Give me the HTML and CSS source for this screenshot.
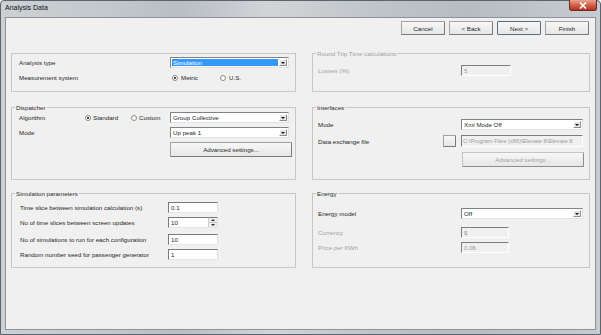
FILE: index.html
```html
<!DOCTYPE html>
<html lang="en">

<head>
    <meta charset="UTF-8">
    <title>Analysis Data</title>
    <link rel="stylesheet" href="styles.css">
</head>

<body>
    <div class="window">
        <div class="titlebar">
            <span class="title">Analysis Data</span>
            <span class="close">
                <svg width="8" height="7" viewBox="0 0 8 7">
                    <path d="M1 0.5 L7 6.5 M7 0.5 L1 6.5" stroke="#fff" stroke-width="1.6" />
                </svg>
            </span>
        </div>

        <div class="client">
            <div class="nav">
                <button class="btn">Cancel</button>
                <button class="btn">&lt; Back</button>
                <button class="btn default">Next &gt;</button>
                <button class="btn">Finish</button>
            </div>

            <div class="groups">
                <!-- analysis type -->
                <div class="group r1 g-analysis">
                    <div class="row">
                        <span class="label">Analysis type</span>
                        <div class="combo w119 selected"><span class="value">Simulation</span><span class="arrow"></span></div>
                    </div>
                    <div class="row">
                        <span class="label">Measurement system</span>
                        <div class="radios">
                            <span class="radio-item w48"><span class="radio checked"></span>Metric</span>
                            <span class="radio-item"><span class="radio"></span>U.S.</span>
                        </div>
                    </div>
                </div>

                <!-- round trip -->
                <div class="group r1 g-right g-rtt disabled">
                    <span class="legend">Round Trip Time calculations</span>
                    <div class="row">
                        <span class="label">Losses (%)</span>
                        <div class="input w50 off">5</div>
                    </div>
                </div>

                <!-- dispatcher -->
                <div class="group r2 g-dispatcher">
                    <span class="legend">Dispatcher</span>
                    <div class="row">
                        <span class="label short">Algorithm</span>
                        <span class="radio-item w46"><span class="radio checked"></span>Standard</span>
                        <span class="radio-item w39"><span class="radio"></span>Custom</span>
                        <div class="combo w119"><span class="value">Group Collective</span><span class="arrow"></span></div>
                    </div>
                    <div class="row">
                        <span class="label">Mode</span>
                        <div class="combo w119"><span class="value">Up peak 1</span><span class="arrow"></span></div>
                    </div>
                    <div class="row tall">
                        <span class="label"></span>
                        <button class="btn wide">Advanced settings...</button>
                    </div>
                </div>

                <!-- interfaces -->
                <div class="group r2 g-right g-interfaces">
                    <span class="legend">Interfaces</span>
                    <div class="row">
                        <span class="label">Mode</span>
                        <div class="combo w122"><span class="value">Xml Mode Off</span><span class="arrow"></span></div>
                    </div>
                    <div class="row h12">
                        <span class="label file">Data exchange file</span>
                        <button class="btn browse"></button>
                        <div class="input w122 off path">C:\Program Files (x86)\Elevate 8\Elevate 8</div>
                    </div>
                    <div class="row tall">
                        <span class="label"></span>
                        <button class="btn wide shifted" disabled>Advanced settings...</button>
                    </div>
                </div>

                <!-- simulation parameters -->
                <div class="group r3 g-sim">
                    <span class="legend">Simulation parameters</span>
                    <div class="row">
                        <span class="label">Time slice between simulation calculation (s)</span>
                        <div class="input w50">0.1</div>
                    </div>
                    <div class="row">
                        <span class="label">No of time slices between screen updates</span>
                        <div class="input w50 spin">
                            <span class="value">10</span>
                            <span class="spinner"><span class="up"></span><span class="down"></span></span>
                        </div>
                    </div>
                    <div class="row spaced">
                        <span class="label">No of simulations to run for each configuration</span>
                        <div class="input w50">10</div>
                    </div>
                    <div class="row">
                        <span class="label">Random number seed for passenger generator</span>
                        <div class="input w50">1</div>
                    </div>
                </div>

                <!-- energy -->
                <div class="group r3 g-right g-energy">
                    <span class="legend">Energy</span>
                    <div class="row">
                        <span class="label">Energy model</span>
                        <div class="combo w122"><span class="value">Off</span><span class="arrow"></span></div>
                    </div>
                    <div class="row spaced-lg dim">
                        <span class="label">Currency</span>
                        <div class="input w48 off">$</div>
                    </div>
                    <div class="row dim">
                        <span class="label">Price per KWh</span>
                        <div class="input w48 off">0.06</div>
                    </div>
                </div>
            </div>
        </div>
    </div>
</body>

</html>
```

FILE: styles.css
```css
* {
    box-sizing: border-box;
}

body {
    margin: 0;
    font-family: "Liberation Sans", Arial, sans-serif;
    font-size: 6.2px;
    color: #262626;
    background: #fff;
}

/* window frame */

.window {
    width: 601px;
    height: 335px;
    display: flex;
    flex-direction: column;
    padding: 0 4px 4px;
    border: 1px solid #5c646b;
    border-radius: 4px 4px 0 0;
    background: linear-gradient(90deg, #cdd1d4 0%, #c3c8cc 18%, #b9bec3 30%, #d2d5d8 45%, #c0c5c9 62%, #b6bcc1 78%, #c8ccd0 100%);
}

.titlebar {
    height: 16px;
    display: flex;
    align-items: flex-start;
}

.title {
    font-size: 7px;
    line-height: 8px;
    color: #111;
    padding: 3px 0 0 0;
}

.close {
    margin: -1px -1px 0 auto;
    width: 28px;
    height: 11px;
    display: flex;
    align-items: center;
    justify-content: center;
    border: 1px solid #6b2a22;
    border-top: none;
    border-radius: 0 0 3px 3px;
    background: linear-gradient(#e9a392, #d4624c 50%, #b8321f);
}

.client {
    flex: 1;
    background: #f0f0f0;
    border: 1px solid #8c9298;
    padding: 3px 5px 0;
}

/* buttons */

.nav {
    display: flex;
    justify-content: flex-end;
    gap: 4px;
    margin-right: 1px;
}

.btn {
    width: 44px;
    height: 14px;
    padding: 0;
    font-family: inherit;
    font-size: 6.2px;
    color: #262626;
    background: linear-gradient(#f7f7f7, #e6e6e6);
    border: 1px solid #a2a2a2;
    border-right-color: #7a7a7a;
    border-bottom-color: #7a7a7a;
    border-radius: 1px;
}

.btn.default {
    border-color: #5d6b78;
}

.btn.wide {
    width: 122px;
    height: 15px;
}

.btn.shifted {
    margin-left: 1px;
}

.btn:disabled {
    color: #a3a3a3;
    border-color: #c4c4c4 #8e8e8e #8e8e8e #c4c4c4;
}

.btn.browse {
    width: 13px;
    height: 12px;
    margin-right: 5px;
}

/* group boxes */

.groups {
    margin-top: 18px;
    display: grid;
    grid-template-columns: 285px 278px;
    grid-template-rows: 39px 15px 73px 13px 75px;
    column-gap: 16px;
}

.group {
    position: relative;
    display: flex;
    flex-direction: column;
    gap: 4px;
    border: 1px solid #c6c6c6;
    padding-left: 7px;
}

.r1 {
    grid-row: 1;
}

.r2 {
    grid-row: 3;
}

.r3 {
    grid-row: 5;
}

.g-right {
    grid-column: 2;
    padding-left: 5px;
}

.legend {
    position: absolute;
    top: -4px;
    left: 3px;
    padding: 0 1px;
    line-height: 7px;
    background: #f0f0f0;
    color: #2a2a2a;
}

.g-analysis {
    padding-top: 3px;
}

.g-rtt {
    padding-top: 11px;
}

.g-dispatcher {
    padding-top: 4px;
}

.g-interfaces {
    padding-top: 11px;
    gap: 5px;
}

.g-sim {
    padding-top: 8px;
    padding-left: 8px;
}

.g-energy {
    padding-top: 14px;
}

.disabled .legend,
.disabled .label,
.dim .label {
    color: #a0a0a0;
}

/* rows and labels */

.row {
    display: flex;
    align-items: center;
    height: 11px;
}

.row.tall {
    height: 15px;
}

.row.h12 {
    height: 12px;
}

.row.spaced {
    margin-top: 2px;
}

.row.spaced-lg {
    margin-top: 4px;
}

.label {
    flex: none;
    width: 151px;
    white-space: nowrap;
}

.label.short {
    width: 66px;
}

.g-sim .label {
    width: 148px;
}

.g-right .label {
    width: 143px;
}

.g-right .label.file {
    width: 125px;
}

/* combo boxes */

.combo {
    height: 11px;
    display: flex;
    background: #fff;
    border: 1px solid;
    border-color: #828282 #e2e2e2 #e2e2e2 #828282;
    padding: 1px;
}

.combo .value {
    flex: 1;
    padding-left: 1px;
    line-height: 7px;
    white-space: nowrap;
}

.combo.selected .value {
    background: #3399ff;
    color: #fff;
    margin-right: 1px;
}

.arrow {
    width: 8px;
    display: flex;
    align-items: center;
    justify-content: center;
    background: #e4e4e4;
    border: 1px solid;
    border-color: #fff #8e8e8e #8e8e8e #fff;
}

.arrow::after {
    content: "";
    border-left: 2px solid transparent;
    border-right: 2px solid transparent;
    border-top: 2px solid #111;
}

.w119 {
    width: 119px;
}

.w122 {
    width: 122px;
}

.w50 {
    width: 50px;
}

.w48 {
    width: 48px;
}

.w46 {
    width: 46px;
}

.w39 {
    width: 39px;
}

/* text inputs */

.input {
    height: 11px;
    display: flex;
    align-items: center;
    padding-left: 2px;
    background: #fff;
    border: 1px solid;
    border-color: #7a7a7a #e4e4e4 #e4e4e4 #7a7a7a;
    white-space: nowrap;
    overflow: hidden;
}

.input.off {
    background: #f0f0f0;
    color: #9c9c9c;
    border-color: #7e7e7e #fff #fff #7e7e7e;
}

.input.path {
    height: 12px;
    padding-left: 1px;
    font-size: 5.9px;
    letter-spacing: -0.05px;
}

.input.spin .value {
    flex: 1;
}

.spinner {
    width: 9px;
    height: 100%;
    display: flex;
    flex-direction: column;
    border-left: 1px solid #d0d0d0;
}

.spinner span {
    flex: 1;
    display: flex;
    align-items: center;
    justify-content: center;
    background: #ececec;
}

.spinner .up {
    border-bottom: 1px solid #c4c4c4;
}

.spinner .up::after {
    content: "";
    border-left: 2px solid transparent;
    border-right: 2px solid transparent;
    border-bottom: 2px solid #333;
}

.spinner .down::after {
    content: "";
    border-left: 2px solid transparent;
    border-right: 2px solid transparent;
    border-top: 2px solid #333;
}

/* radio buttons */

.radios {
    display: flex;
    margin-left: 2px;
}

.radio-item {
    display: flex;
    align-items: center;
    gap: 3px;
    white-space: nowrap;
}

.g-dispatcher .radio-item {
    gap: 2px;
}

.radio {
    width: 6px;
    height: 6px;
    display: flex;
    align-items: center;
    justify-content: center;
    border: 1px solid #8a8a8a;
    border-radius: 50%;
    background: #fff;
}

.radio.checked::after {
    content: "";
    width: 2px;
    height: 2px;
    border-radius: 50%;
    background: #1a1a1a;
}
```
